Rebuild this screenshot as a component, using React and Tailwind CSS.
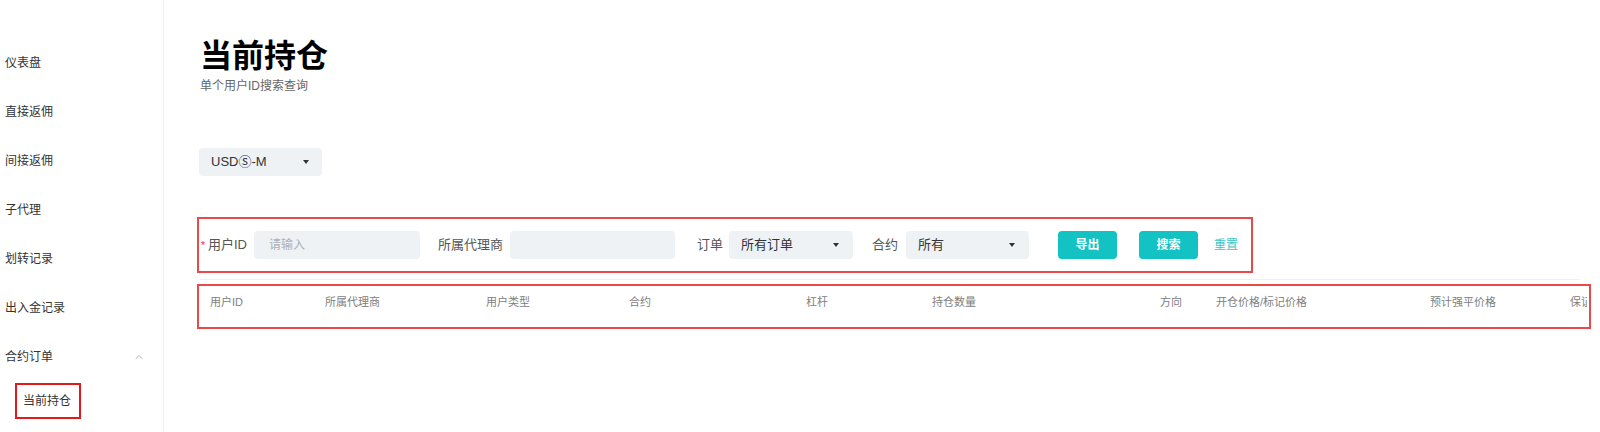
import React from 'react';
import { ChevronUp } from 'lucide-react';

const font = { fontFamily: '"Liberation Sans", "Noto Sans CJK SC", sans-serif' };

const menu = ['仪表盘', '直接返佣', '间接返佣', '子代理', '划转记录', '出入金记录'];

const columns = [
  { label: '用户ID', w: 'w-[115px]' },
  { label: '所属代理商', w: 'w-[161px]' },
  { label: '用户类型', w: 'w-[143px]' },
  { label: '合约', w: 'w-[177px]' },
  { label: '杠杆', w: 'w-[126px]' },
  { label: '持仓数量', w: 'w-[228px]' },
  { label: '方向', w: 'w-[56px]' },
  { label: '开仓价格/标记价格', w: 'w-[214px]' },
  { label: '预计强平价格', w: 'w-[140px]' },
  { label: '保证金', w: 'w-[80px]' },
];

const Caret = () => (
  <span className="w-0 h-0 border-l-[3px] border-r-[3px] border-t-[4px] border-l-transparent border-r-transparent border-t-[#333]" />
);

const Select = ({ value, w }) => (
  <div className={`${w} h-[28px] rounded-[4px] bg-[#eef2f5] flex items-center justify-between pl-[12px] pr-[14px] text-[13px] text-[#333] shrink-0`}>
    <span>{value}</span>
    <Caret />
  </div>
);

const Label = ({ children, w, pr }) => (
  <div className={`${w} ${pr} flex justify-end items-center text-[13px] text-[#555] shrink-0`}>
    {children}
  </div>
);

const App = () => {
  return (
    <div className="w-[1600px] h-[432px] bg-white flex overflow-hidden" style={font}>
      {/* 侧边栏 */}
      <aside className="w-[164px] h-full border-r border-[#f0f0f0] pt-[38px] shrink-0">
        {menu.map((m) => (
          <div key={m} className="h-[49px] flex items-center pl-[5px] text-[12px] text-[#333]">
            {m}
          </div>
        ))}
        <div className="h-[49px] flex items-center justify-between pl-[5px] pr-[18px] text-[12px] text-[#333]">
          <span>合约订单</span>
          <ChevronUp size={12} strokeWidth={1.5} className="text-[#999]" />
        </div>
        <div className="pl-[15px] mt-[2px]">
          <div className="w-[66px] h-[36px] border-2 border-[#e01b1b] flex items-center pl-[6px] text-[12px] text-[#333]">
            当前持仓
          </div>
        </div>
      </aside>

      {/* 主体 */}
      <main className="flex-1 pl-[33px] pt-[40px]">
        <h1 className="pl-[3px] text-[32px] leading-[32px] font-bold text-black">当前持仓</h1>
        <p className="pl-[3px] mt-[6px] text-[12px] leading-[16px] text-[#666]">单个用户ID搜索查询</p>

        <div className="ml-[2px] mt-[54px] w-[123px] h-[28px] rounded-[4px] bg-[#eef2f5] flex items-center justify-between pl-[12px] pr-[13px] text-[13px] text-[#333]">
          <span>USDⓈ-M</span>
          <Caret />
        </div>

        {/* 搜索栏 */}
        <div className="mt-[41px] w-[1056px] h-[56px] border-2 border-[#e84a4a] flex items-center">
          <Label w="w-[55px]" pr="pr-[7px]">
            <span className="text-[#f5222d] text-[10px] mr-[3px]">*</span>
            <span>用户ID</span>
          </Label>
          <div className="w-[166px] h-[28px] rounded-[4px] bg-[#eef2f5] flex items-center pl-[15px] text-[12px] text-[#aab0b8] shrink-0">
            请输入
          </div>
          <Label w="w-[90px]" pr="pr-[7px]">所属代理商</Label>
          <div className="w-[165px] h-[28px] rounded-[4px] bg-[#eef2f5] shrink-0" />
          <Label w="w-[54px]" pr="pr-[6px]">订单</Label>
          <Select value="所有订单" w="w-[124px]" />
          <Label w="w-[53px]" pr="pr-[8px]">合约</Label>
          <Select value="所有" w="w-[123px]" />
          <button className="ml-[29px] w-[59px] h-[28px] rounded-[4px] bg-[#13c2c2] text-white text-[12px] font-bold shrink-0">
            导出
          </button>
          <button className="ml-[22px] w-[59px] h-[28px] rounded-[4px] bg-[#13c2c2] text-white text-[12px] font-bold shrink-0">
            搜索
          </button>
          <span className="ml-[16px] text-[12px] text-[#3cc4c4]">重置</span>
        </div>

        <div className="mt-[6px] ml-[3px] w-[1380px] h-px bg-[#f0f0f0]" />

        {/* 表头 */}
        <div className="mt-[4px] w-[1394px] h-[45px] border-2 border-[#e84a4a]">
          <div className="mr-[2px] overflow-hidden flex pl-[11px] pt-[8px] text-[11px] leading-[16px] text-[#808080] whitespace-nowrap">
            {columns.map((c) => (
              <div key={c.label} className={`${c.w} shrink-0`}>
                {c.label}
              </div>
            ))}
          </div>
        </div>
      </main>
    </div>
  );
};

export default App;
